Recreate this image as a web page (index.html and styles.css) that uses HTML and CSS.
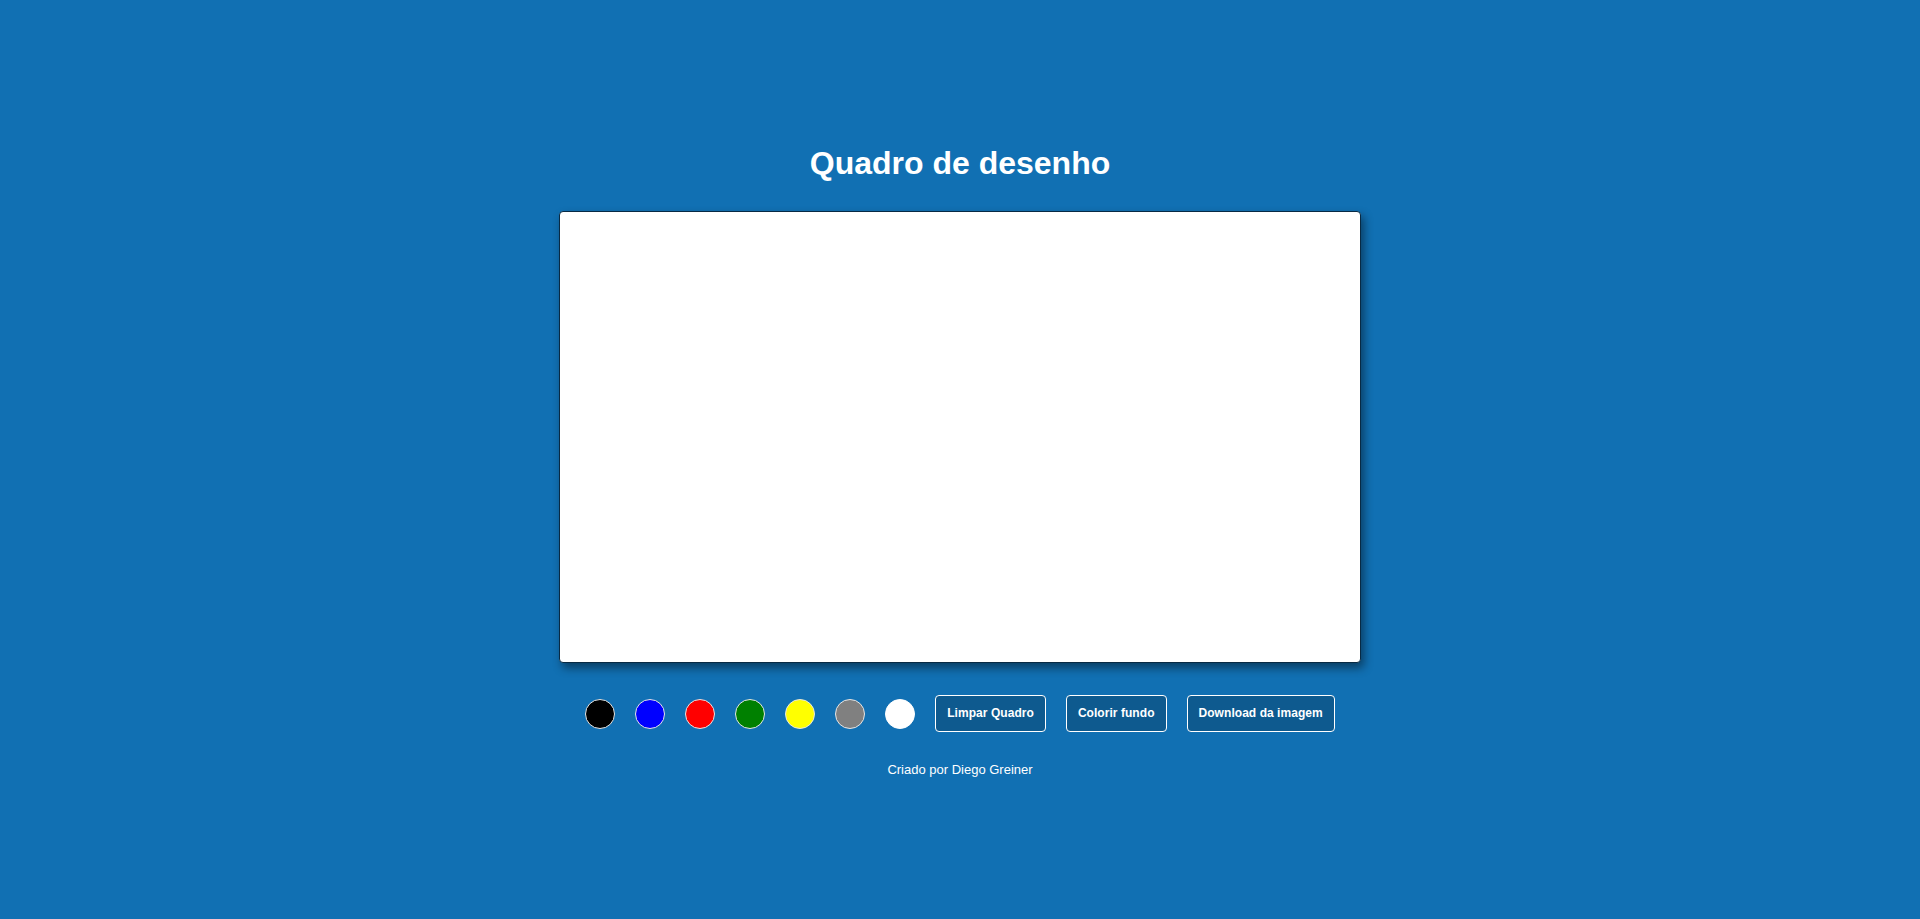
FILE: index.html
```html
<!DOCTYPE html>
<html lang="pt-BR">
<head>
<meta charset="utf-8">
<title>Quadro de desenho</title>
<link rel="stylesheet" href="styles.css">
</head>
<body>
<main class="app">
  <h1 class="title">Quadro de desenho</h1>
  <canvas class="board" width="800" height="450"></canvas>
  <div class="controls">
    <button class="swatch swatch-black" aria-label="preto"></button>
    <button class="swatch swatch-blue" aria-label="azul"></button>
    <button class="swatch swatch-red" aria-label="vermelho"></button>
    <button class="swatch swatch-green" aria-label="verde"></button>
    <button class="swatch swatch-yellow" aria-label="amarelo"></button>
    <button class="swatch swatch-gray" aria-label="cinza"></button>
    <button class="swatch swatch-white" aria-label="branco"></button>
    <button class="btn">Limpar Quadro</button>
    <button class="btn">Colorir fundo</button>
    <button class="btn">Download da imagem</button>
  </div>
  <p class="credit">Criado por Diego Greiner</p>
</main>
</body>
</html>
```
FILE: styles.css
```css
html, body {
  margin: 0;
  padding: 0;
  height: 100%;
}
body {
  background: #1170b3;
  font-family: "Liberation Sans", Arial, sans-serif;
  color: #ffffff;
}
.app {
  display: flex;
  flex-direction: column;
  align-items: center;
  padding-top: 145px;
}
.title {
  margin: 0;
  font-size: 32px;
  font-weight: bold;
  line-height: 37px;
}
.board {
  display: block;
  margin-top: 29px;
  width: 800px;
  height: 450px;
  background: #ffffff;
  border: 1px solid #082a44;
  border-radius: 4px;
  box-shadow: 3px 5px 10px rgba(0, 0, 0, 0.45);
}
.controls {
  display: flex;
  align-items: center;
  gap: 20px;
  margin-top: 32px;
}
.swatch {
  width: 30px;
  height: 30px;
  border-radius: 50%;
  border: 1px solid #e6e6e6;
  padding: 0;
  cursor: pointer;
}
.swatch-black { background: #000000; }
.swatch-blue { background: #0000ff; }
.swatch-red { background: #ff0000; }
.swatch-green { background: #008000; }
.swatch-yellow { background: #ffff00; }
.swatch-gray { background: #808080; }
.swatch-white { background: #ffffff; border-color: #ffffff; }
.btn {
  font-family: "Liberation Sans", Arial, sans-serif;
  font-size: 12px;
  font-weight: bold;
  line-height: 15px;
  letter-spacing: 0.05px;
  color: #ffffff;
  background: #0e5a8f;
  border: 1px solid #ffffff;
  border-radius: 4px;
  padding: 10px 11px;
  cursor: pointer;
}
.credit {
  margin: 30px 0 0;
  font-size: 13px;
  line-height: 15px;
}
```
